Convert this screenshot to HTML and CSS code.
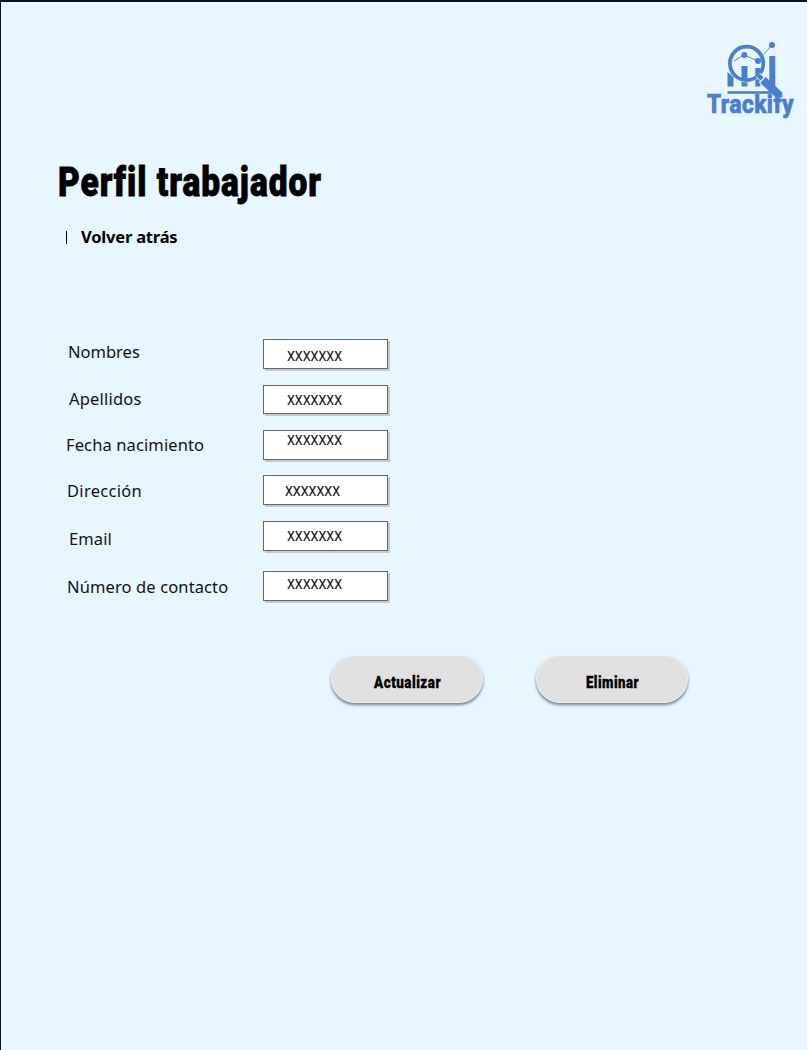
FILE: index.html
```html
<!DOCTYPE html>
<html lang="es">
<head>
<meta charset="utf-8">
<title>Perfil trabajador</title>
<link rel="stylesheet" href="styles.css">
</head>
<body>
<main class="page">
  <header class="brand">
    <svg class="logo" width="100" height="100" viewBox="0 0 100 100" role="img" aria-label="Trackify">
      <g fill="#4a7fcc">
        <path d="M20.500 42l6 5v9.500h-6zM34.500 36h6v20.500h-6zM48.300 38h5v18.500h-5zM62.300 26h6v34l-6-6z"/>
        <rect x="20.500" y="61.200" width="44" height="2.600"/>
        <circle cx="37.300" cy="25" r="3"/><circle cx="51" cy="31" r="3"/><circle cx="65" cy="15" r="3"/>
      </g>
      <g fill="none" stroke="#4a7fcc">
        <path d="M27 31l10-6 14 6 14-16" stroke-width=".9"/>
        <circle cx="39.600" cy="33.400" r="18.600" stroke="#e7f6ff" stroke-width="1"/>
        <circle cx="39.600" cy="33.400" r="16.700" stroke-width="3.700"/>
        <path d="M51 45l5 5" stroke="#e7f6ff" stroke-width="6"/>
        <path d="M51 45l5 5" stroke-width="4.500"/>
        <path d="M55 49l3 3" stroke="#e7f6ff" stroke-width="9"/>
        <path d="M56 50l17 16" stroke-width="8"/>
      </g>
      <text class="logo-text" x="0" y="83" textLength="87" lengthAdjust="spacingAndGlyphs">Trackify</text>
    </svg>
  </header>
  <h1 class="title">
    <svg width="280" height="50"><text x="0" y="36" textLength="264" lengthAdjust="spacingAndGlyphs">Perfil trabajador</text></svg>
  </h1>
  <nav class="back"><span class="bar"></span><a class="back-link">Volver atrás</a></nav>
  <section class="fields">
    <div class="row nombres"><span class="label">Nombres</span><div class="field"><span>xxxxxxx</span></div></div>
    <div class="row apellidos"><span class="label">Apellidos</span><div class="field"><span>xxxxxxx</span></div></div>
    <div class="row fecha"><span class="label">Fecha nacimiento</span><div class="field"><span>xxxxxxx</span></div></div>
    <div class="row direccion"><span class="label">Dirección</span><div class="field"><span>xxxxxxx</span></div></div>
    <div class="row email"><span class="label">Email</span><div class="field"><span>xxxxxxx</span></div></div>
    <div class="row contacto"><span class="label">Número de contacto</span><div class="field"><span>xxxxxxx</span></div></div>
  </section>
  <div class="actions">
    <button class="btn"><svg width="66" height="22"><text x="0" y="16" textLength="67" lengthAdjust="spacingAndGlyphs">Actualizar</text></svg></button>
    <button class="btn"><svg width="52" height="22"><text x="0" y="16" textLength="53" lengthAdjust="spacingAndGlyphs">Eliminar</text></svg></button>
  </div>
</main>
</body>
</html>
```
FILE: styles.css
```css
* { box-sizing: border-box; }
body { margin: 0; font-family: "Noto Sans", sans-serif; color: #000; }
svg { display: block; overflow: visible; }
.page { height: 1050px; background: #e7f6ff; border-top: 2px solid #101018; border-left: 1px solid #101018; overflow: hidden; }
.brand { height: 158px; padding: 28px 0 0 706px; }
.logo-text { font: 800 26px Roboto, sans-serif; letter-spacing: .5px; font-variant-ligatures: none; fill: #4a7fcc; stroke: #4a7fcc; stroke-width: .7; }
.title { margin: 0; height: 60px; padding-left: 57px; font: 900 40px/50px Roboto, sans-serif; letter-spacing: 1.200px; font-variant-ligatures: none; }
.title text { stroke: #000; stroke-width: .8; }
.back { display: flex; align-items: center; height: 30px; margin-top: 2px; padding-left: 65px; }
.bar { width: 1px; height: 13px; margin-right: 14px; background: #000; }
.back-link { font-size: 16.500px; font-weight: 700; line-height: 20px; letter-spacing: -.2px; }
.fields { padding-top: 87px; font-size: 16.500px; line-height: 20px; color: #111; }
.row { display: flex; height: 30px; margin-bottom: 16px; }
.label { width: 195px; margin-left: 67px; white-space: nowrap; letter-spacing: .12px; }
.field { width: 125px; height: 30px; padding-left: 23px; background: #fff; border: 1px solid #666; box-shadow: 2px 2px 0 #c7c9ca; }
.field span { display: block; font-size: 17.500px; transform: scaleX(.85); transform-origin: left; }
.nombres .label { padding-top: 3px; letter-spacing: 0; }
.nombres .field span { margin-top: 4px; }
.apellidos { margin-bottom: 15px; }
.apellidos .label { padding-top: 4px; margin-left: 68px; width: 194px; letter-spacing: .2px; }
.apellidos .field { height: 29px; }
.apellidos .field span { margin-top: 2px; }
.fecha { margin-bottom: 15px; }
.fecha .label { padding-top: 5px; margin-left: 65px; width: 197px; }
.fecha .field span { margin-top: -3px; }
.direccion .label { padding-top: 6px; margin-left: 66px; width: 196px; letter-spacing: .3px; }
.direccion .field { padding-left: 21px; }
.direccion .field span { margin-top: 3px; }
.email { margin-bottom: 20px; }
.email .label { padding-top: 8px; margin-left: 68px; width: 194px; }
.email .field span { margin-top: 2px; }
.contacto { margin-bottom: 0; }
.contacto .label { padding-top: 6px; margin-left: 66px; width: 196px; }
.contacto .field span { margin-top: 0; }
.actions { display: flex; gap: 53px; padding: 54px 0 0 330px; }
.btn { display: flex; justify-content: center; width: 152px; height: 48px; padding: 16px 0 0; border: 1px solid #f0f3f5; border-radius: 24px; background: #e1e1e1; box-shadow: 0 2px 3px #75808a; font: 900 16.500px/20px Roboto, sans-serif; letter-spacing: .6px; color: #000; }
.btn text { stroke: #000; stroke-width: .3; }
```
